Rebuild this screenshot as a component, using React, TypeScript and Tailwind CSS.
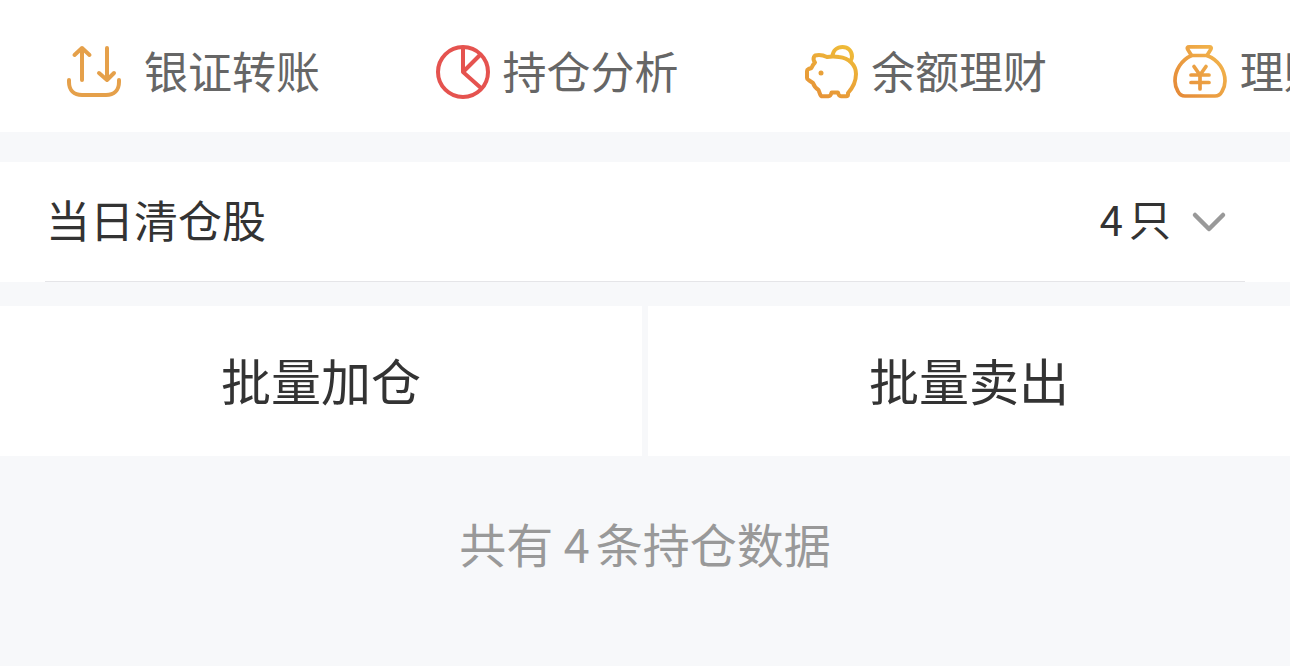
import type { ReactNode } from "react";

type Shortcut = {
  label: string;
  icon: ReactNode;
  gap: string;
};

function TransferIcon() {
  return (
    <svg viewBox="0 0 56 56" className="size-14 shrink-0" fill="none" stroke="#e5a04a" strokeWidth="4" strokeLinecap="round" strokeLinejoin="round" aria-hidden="true">
      <path d="M16 36V4M8.500 11L16 4l7.500 7" />
      <path d="M41 4v32M33 29l8 7 7-7" />
      <path d="M3 36v2c0 8 5 13 13 13h24c8 0 13-5 13-13v-2" />
    </svg>
  );
}

function PieIcon() {
  return (
    <svg viewBox="0 0 56 56" className="size-14 shrink-0" fill="none" stroke="#e5534f" strokeWidth="4" strokeLinejoin="round" aria-hidden="true">
      <circle cx="28" cy="28" r="25" />
      <path d="M28 3v25l18.500 16.500" />
      <path d="M28 28L45 11" />
    </svg>
  );
}

function PiggyIcon() {
  return (
    <svg viewBox="0 0 56 56" className="size-14 shrink-0" fill="none" stroke="url(#piggy)" strokeWidth="4" strokeLinecap="round" strokeLinejoin="round" aria-hidden="true">
      <defs>
        <linearGradient id="piggy" x1="44" y1="2" x2="16" y2="54" gradientUnits="userSpaceOnUse">
          <stop offset="0" stopColor="#efbb38" />
          <stop offset="1" stopColor="#e69338" />
        </linearGradient>
      </defs>
      <path d="M29.500 12C30 6.500 34 3 39.500 3s9.500 4 9.500 9.500c0 1.500-.5 3-1.500 4.500" />
      <path d="M12 11.500c4-1 8-.5 12 1.500 4-.8 8-.8 12 0 10 1 17 8 17 17 0 9-3.500 14-8 19v1.500c0 1-.8 1.800-1.800 1.800H38c-1.500 0-2.500-1-3-3.800h-6.500c-.5 2.800-1.500 3.800-3 3.800h-6c-1.500 0-2-.8-2.500-2.300L15.500 46c-3-2-4.500-4-5.500-7l-4.500-3C4.500 35.500 4 35 4 34v-7c0-1 .5-1.500 1.500-2l3-1c.8-2.500 2-4 3.500-5.500-1.500-2-1.800-4-1-5.500.2-.8.5-1.300 1-1.500z" />
      <circle cx="18" cy="29" r="2.500" fill="#e8a038" stroke="none" />
    </svg>
  );
}

function MoneyBagIcon() {
  return (
    <svg viewBox="0 0 56 56" className="size-14 shrink-0" fill="none" stroke="url(#bag)" strokeWidth="3.700" strokeLinecap="round" strokeLinejoin="round" aria-hidden="true">
      <defs>
        <linearGradient id="bag" x1="4" y1="50" x2="52" y2="10" gradientUnits="userSpaceOnUse">
          <stop offset="0" stopColor="#e58a38" />
          <stop offset="1" stopColor="#f2b54c" />
        </linearGradient>
      </defs>
      <path d="M19.500 11.500L15.500 5c-.6-1.200 0-2.200 1.500-2.200h20.500c1.500 0 2.100 1 1.500 2.200l-4 6.500z" />
      <path d="M19.500 11.500C9.500 16 3 26 3 37c0 4 1 7 3 10.500C7.500 50.500 9.500 52 13 52h30c3.500 0 5.500-1.500 7-4.500 2-3.500 3-6.500 3-10.500 0-11-6.500-21-18-25.500" />
      <path d="M22 22.500l6 8.500 6-8.500M28 31v14M19 31h18M19 38.500h18" />
    </svg>
  );
}

const shortcuts: Shortcut[] = [
  { label: "银证转账", icon: <TransferIcon />, gap: "gap-[22px]" },
  { label: "持仓分析", icon: <PieIcon />, gap: "gap-3" },
  { label: "余额理财", icon: <PiggyIcon />, gap: "gap-3" },
  { label: "理财产品", icon: <MoneyBagIcon />, gap: "gap-3" },
];

export default function App() {
  return (
    <main className="min-h-screen overflow-hidden bg-[#f7f8fa] font-['Noto_Sans_CJK_SC',sans-serif] text-[#333]">
      {/* Shortcuts, three and a half per screen */}
      <nav className="flex overflow-hidden bg-white pt-10 pb-7">
        {shortcuts.map((s) => (
          <a key={s.label} href="#" className={`flex w-2/7 shrink-0 items-center pl-[66px] ${s.gap}`}>
            {s.icon}
            <span className="pb-1 text-[44px] leading-15 whitespace-nowrap text-[#666]">{s.label}</span>
          </a>
        ))}
      </nav>

      {/* Positions closed today */}
      <section className="mt-[30px] bg-white px-[45px]">
        <button type="button" className="flex h-[120px] w-full items-center justify-between border-b border-[#e5e5e8] pr-[18px]">
          <span className="pb-1.5 pl-px text-[44px] leading-15">当日清仓股</span>
          <span className="flex items-center">
            <span className="mr-1.5 pb-2 text-[42px] leading-15">4</span>
            <span className="mr-5 pb-2 text-[42px] leading-15">只</span>
            <svg viewBox="0 0 36 24" className="h-6 w-9" fill="none" stroke="#999" strokeWidth="4.500" strokeLinecap="round" strokeLinejoin="round" aria-hidden="true">
              <path d="M4 5l14 14L32 5" />
            </svg>
          </span>
        </button>
      </section>

      <div className="mt-6 grid grid-cols-2 gap-1.5">
        <button type="button" className="h-[150px] bg-white pb-1 text-[50px]">批量加仓</button>
        <button type="button" className="h-[150px] bg-white pb-1 text-[50px]">批量卖出</button>
      </div>

      <p className="mt-13 text-center text-[47px] leading-[70px] text-[#999]">
        共有 <span className="mr-1.5">4</span>条持仓数据
      </p>
    </main>
  );
}
